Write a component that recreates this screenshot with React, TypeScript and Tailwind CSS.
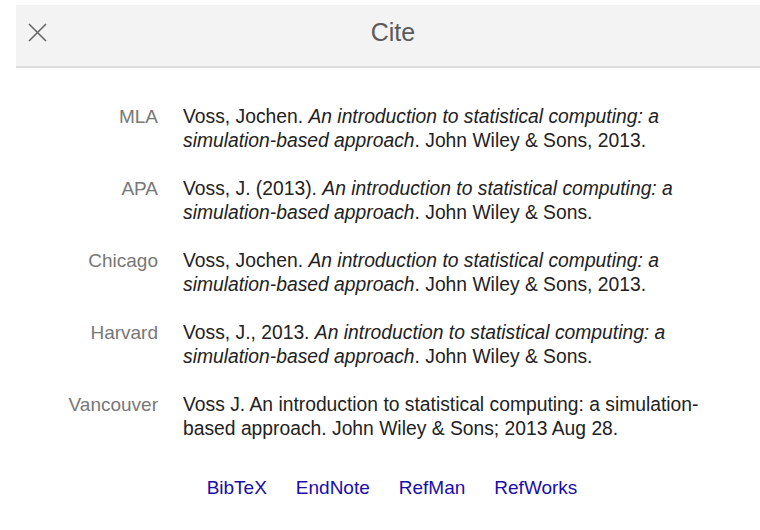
const citations = [
  {
    style: "MLA",
    body: (
      <>
        Voss, Jochen. <i>An introduction to statistical computing: a simulation-based approach</i>. John Wiley &amp; Sons, 2013.
      </>
    ),
  },
  {
    style: "APA",
    body: (
      <>
        Voss, J. (2013). <i>An introduction to statistical computing: a simulation-based approach</i>. John Wiley &amp; Sons.
      </>
    ),
  },
  {
    style: "Chicago",
    body: (
      <>
        Voss, Jochen. <i>An introduction to statistical computing: a simulation-based approach</i>. John Wiley &amp; Sons, 2013.
      </>
    ),
  },
  {
    style: "Harvard",
    body: (
      <>
        Voss, J., 2013. <i>An introduction to statistical computing: a simulation-based approach</i>. John Wiley &amp; Sons.
      </>
    ),
  },
  {
    style: "Vancouver",
    body: <>Voss J. An introduction to statistical computing: a simulation-based approach. John Wiley &amp; Sons; 2013 Aug 28.</>,
  },
];

const exports = ["BibTeX", "EndNote", "RefMan", "RefWorks"];

export default function App() {
  return (
    <div className="w-[760px] h-[530px] bg-white pt-[5px] pl-[16px] font-['Liberation_Sans',Arial,sans-serif] overflow-hidden">
      <div className="h-[63px] bg-[#f3f3f3] border-b-2 border-[#dcdcdc] flex items-center relative">
        <button className="absolute left-[12px] top-[18px] w-[19px] h-[19px] text-[#666]">
          <svg viewBox="0 0 19 19" width="19" height="19" fill="none" stroke="currentColor" strokeWidth="1.6">
            <path d="M1 1L18 18M18 1L1 18" />
          </svg>
        </button>
        <div className="flex-1 text-center pl-[10px] pb-[6px] text-[25px] text-[#5a5a5a] leading-none">Cite</div>
      </div>

      <div className="pt-[37px] flex flex-col gap-[24px]">
        {citations.map((c) => (
          <div key={c.style} className="flex leading-[24px]">
            <div className="w-[142px] shrink-0 text-right text-[19px] text-[#777]">{c.style}</div>
            <div className="w-[525px] ml-[25px] text-[19.3px] text-[#222]">{c.body}</div>
          </div>
        ))}
      </div>

      <div className="mt-[35px] flex justify-center gap-[29px] pl-[8px] text-[19px] leading-[24px] text-[#1a0dab]">
        {exports.map((e) => (
          <a key={e} href="#" className="hover:underline">
            {e}
          </a>
        ))}
      </div>
    </div>
  );
}
